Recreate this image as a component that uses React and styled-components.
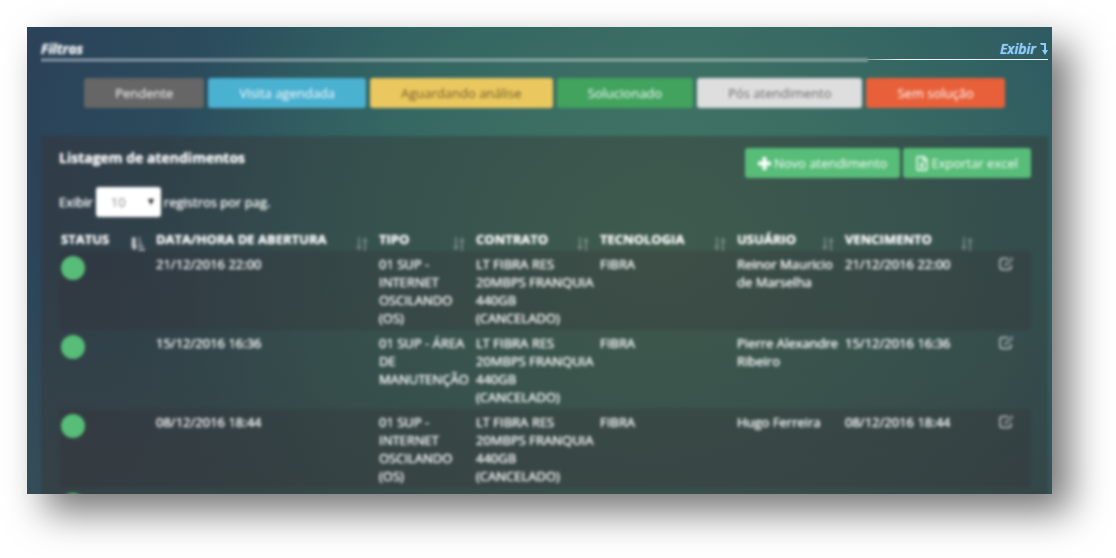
import { useState } from "react";
import styled, { createGlobalStyle, css } from "styled-components";
import { FaRegFileExcel } from "react-icons/fa";

const GlobalStyle = createGlobalStyle`
  * {
    box-sizing: border-box;
  }

  body {
    margin: 0;
    background: #fff;
    color: #fff;
    font-family: "Open Sans", "Noto Sans", sans-serif;
    font-size: 13px;
    line-height: 18px;
  }

  button,
  select {
    font: inherit;
  }
`;

const outOfFocus = css`
  filter: blur(1px) blur(1px);
  text-shadow: 0 0 1px currentColor;
`;

const Page = styled.div`
  display: flex;
  height: 100vh;
  padding: 27px 64px 64px 27px;
  overflow: hidden;
`;

const Screen = styled.main`
  flex: 1;
  min-width: 0;
  padding: 12px 4px 0 14px;
  overflow: hidden;
  background:
    radial-gradient(
      ellipse 50% 82% at 62% 46%,
      rgba(76, 126, 98, 0.75) 0%,
      rgba(70, 122, 100, 0.45) 50%,
      rgba(60, 112, 104, 0) 100%
    ),
    linear-gradient(
      to bottom,
      rgba(60, 84, 84, 0) 50%,
      rgba(60, 84, 84, 0.5) 100%
    ),
    linear-gradient(
      100deg,
      #2b4259 0%,
      #2b4a5c 14%,
      #2c5c62 34%,
      #326463 60%,
      #2e5c62 84%,
      #2b5660 100%
    );
  box-shadow: 18px 18px 36px rgba(0, 0, 0, 0.54);
`;

const FilterHeader = styled.header`
  display: flex;
  justify-content: space-between;
  height: 20px;
  font-size: 14px;
  line-height: 20px;
  font-style: italic;
`;

const FilterTitle = styled.h2`
  margin: 0;
  font-size: 14px;
  font-weight: 700;
  ${outOfFocus}
`;

const ToggleButton = styled.button`
  display: flex;
  align-items: center;
  gap: 4px;
  padding: 0;
  border: 0;
  background: none;
  color: #8fcdfb;
  font-size: 14px;
  font-style: italic;
  font-weight: 600;
  text-shadow: 0 0 1px currentColor;
  cursor: pointer;
`;

const Rule = styled.div`
  display: flex;
  align-items: center;
  height: 1px;
`;

const SoftLine = styled.span`
  flex: 1;
  height: 4px;
  background: rgba(255, 255, 255, 0.32);
  filter: blur(1px);
`;

const SharpLine = styled.span`
  width: 180px;
  height: 1px;
  background: linear-gradient(to right, rgba(255, 255, 255, 0.4), #e8f2f4 32px);
`;

const Filters = styled.nav`
  display: flex;
  justify-content: center;
  gap: 4px;
  padding: 18px 0 28px;
  ${outOfFocus}
`;

const FilterButton = styled.button`
  height: 30px;
  padding: 0 31px;
  border: 0;
  border-radius: 3px;
  background: ${({ $bg }) => $bg};
  color: ${({ $color }) => $color || "#fff"};
  cursor: pointer;
`;

const Panel = styled.section`
  min-height: 100%;
  padding: 12px 17px 0 18px;
  background: rgba(54, 52, 50, 0.44);
  ${outOfFocus}
`;

const PanelHeader = styled.div`
  display: flex;
  justify-content: space-between;
`;

const PanelTitle = styled.h1`
  margin: 0;
  font-size: 14px;
  line-height: 20px;
  font-weight: 700;
`;

const Actions = styled.div`
  display: flex;
  gap: 3px;
`;

const ActionButton = styled.button`
  display: flex;
  align-items: center;
  gap: 3px;
  height: 30px;
  padding: 0 13px;
  border: 0;
  border-radius: 3px;
  background: #57bd78;
  color: #fff;
  cursor: pointer;
`;

const SheetIcon = styled(FaRegFileExcel)`
  width: 12px;
  height: 15px;
`;

const PageSize = styled.label`
  display: flex;
  align-items: center;
  gap: 3px;
  margin: 9px 0 13px;
`;

const SelectBox = styled.span`
  position: relative;
  display: flex;

  svg {
    position: absolute;
    top: 12px;
    right: 7px;
    pointer-events: none;
  }
`;

const Select = styled.select`
  appearance: none;
  width: 65px;
  height: 30px;
  padding: 0 15px;
  border: 0;
  border-radius: 3px;
  background: #fff;
  color: #888;
`;

const Table = styled.table`
  width: 100%;
  table-layout: fixed;
  border-collapse: collapse;
`;

const Col = styled.col`
  width: ${({ $width }) => $width};
`;

const Th = styled.th`
  padding: 0 9px 0 2px;
  text-align: left;
  font-weight: 700;
  white-space: nowrap;
`;

const ThContent = styled.div`
  display: flex;
  justify-content: space-between;
  height: 21px;

  svg {
    align-self: flex-end;
  }
`;

const Row = styled.tr`
  &:nth-child(odd) {
    background: rgba(54, 40, 44, 0.22);
  }
`;

const Td = styled.td`
  height: 79px;
  padding: 4px 2px 3px;
  vertical-align: top;
`;

const StatusDot = styled.span`
  display: block;
  width: 24px;
  height: 24px;
  margin-top: 1px;
  border-radius: 50%;
  background: #57bd78;
`;

const EditButton = styled.button`
  display: block;
  margin: 0 0 0 15px;
  padding: 2px 0;
  border: 0;
  background: none;
  color: rgba(255, 255, 255, 0.7);
  line-height: 0;
  cursor: pointer;
`;

const PlusIcon = () => (
  <svg width="13" height="13" viewBox="0 0 13 13" fill="currentColor">
    <path d="M4.500 0h4v4.500H13v4H8.500V13h-4V8.500H0v-4h4.500z" />
  </svg>
);

const EditIcon = () => (
  <svg
    width="15"
    height="14"
    viewBox="0 0 15 14"
    fill="none"
    stroke="currentColor"
    strokeWidth="1.500"
  >
    <path d="M9 1.500H3.500Q1 1.500 1 4v6q0 2.500 2.500 2.500h6Q12 12.500 12 10V8" />
    <path d="M6 8.500l.5-2L12.500.800l1.500 1.400L8 8z" strokeWidth="1" />
  </svg>
);

const SortIcon = ({ active }) =>
  active ? (
    <svg width="14" height="14" viewBox="0 0 15 14" fill="#fff" opacity="0.75">
      <path d="M1 0h4v9h2l-3.500 5L0 9h1zM8 0h2v2H8zM8 4h3v2H8zM8 8h5v2H8zM8 12h7v2H8z" />
    </svg>
  ) : (
    <svg width="12" height="14" viewBox="0 0 12 14" fill="#fff" opacity="0.28">
      <path d="M2 0h2v9h2l-3 5-3-5h2zM8 14h2V5h2L9 0 6 5h2z" />
    </svg>
  );

const filters = [
  { label: "Pendente", bg: "#666" },
  { label: "Visita agendada", bg: "#4bb1d1" },
  { label: "Aguardando análise", bg: "#eac85f", color: "#6f5b2b" },
  { label: "Solucionado", bg: "#41a35e" },
  { label: "Pós atendimento", bg: "#dedede", color: "#6a6a6a" },
  { label: "Sem solução", bg: "#e8603a" },
];

const columns = [
  { label: "STATUS", width: "95px", active: true },
  { label: "DATA/HORA DE ABERTURA", width: "auto" },
  { label: "TIPO", width: "97px" },
  { label: "CONTRATO", width: "124px" },
  { label: "TECNOLOGIA", width: "137px" },
  { label: "USUÁRIO", width: "108px" },
  { label: "VENCIMENTO", width: "139px" },
];

const contract = "LT FIBRA RES 20MBPS FRANQUIA 440GB (CANCELADO)";

const requests = [
  {
    id: 1,
    date: "21/12/2016 22:00",
    type: "01 SUP - INTERNET OSCILANDO (OS)",
    user: "Reinor Mauricio de Marselha",
  },
  {
    id: 2,
    date: "15/12/2016 16:36",
    type: "01 SUP - ÁREA DE MANUTENÇÃO",
    user: "Pierre Alexandre Ribeiro",
  },
  {
    id: 3,
    date: "08/12/2016 18:44",
    type: "01 SUP - INTERNET OSCILANDO (OS)",
    user: "Hugo Ferreira",
  },
  { id: 4 },
];

const RequestRow = ({ date, type, user }) => (
  <Row>
    <Td>
      <StatusDot />
    </Td>
    <Td>{date}</Td>
    <Td>{type}</Td>
    <Td>{date && contract}</Td>
    <Td>{date && "FIBRA"}</Td>
    <Td>{user}</Td>
    <Td>{date}</Td>
    <Td>
      {date && (
        <EditButton type="button" aria-label="Editar">
          <EditIcon />
        </EditButton>
      )}
    </Td>
  </Row>
);

export default function App() {
  const [pageSize, setPageSize] = useState("10");

  return (
    <>
      <GlobalStyle />
      <Page>
        <Screen>
          <FilterHeader>
            <FilterTitle>Filtros</FilterTitle>
            <ToggleButton type="button">
              Exibir
              <svg width="8" height="12" viewBox="0 0 8 12" fill="currentColor">
                <path d="M0 0h6v7h2l-3 5-3-5h2V2H1z" />
              </svg>
            </ToggleButton>
          </FilterHeader>
          <Rule>
            <SoftLine />
            <SharpLine />
          </Rule>
          <Filters>
            {filters.map(({ label, bg, color }) => (
              <FilterButton key={label} type="button" $bg={bg} $color={color}>
                {label}
              </FilterButton>
            ))}
          </Filters>
          <Panel>
            <PanelHeader>
              <PanelTitle>Listagem de atendimentos</PanelTitle>
              <Actions>
                <ActionButton type="button">
                  <PlusIcon />
                  Novo atendimento
                </ActionButton>
                <ActionButton type="button">
                  <SheetIcon />
                  Exportar excel
                </ActionButton>
              </Actions>
            </PanelHeader>
            <PageSize>
              Exibir
              <SelectBox>
                <Select
                  value={pageSize}
                  onChange={({ target }) => setPageSize(target.value)}
                >
                  <option>10</option>
                  <option>25</option>
                  <option>50</option>
                </Select>
                <svg width="6" height="6" viewBox="0 0 6 6" fill="#222">
                  <path d="M0 0h6L3 6z" />
                </svg>
              </SelectBox>
              registros por pag.
            </PageSize>
            <Table>
              <colgroup>
                {columns.map(({ label, width }) => (
                  <Col key={label} $width={width} />
                ))}
                <Col $width="49px" />
              </colgroup>
              <thead>
                <tr>
                  {columns.map(({ label, active }) => (
                    <Th key={label} scope="col">
                      <ThContent>
                        {label}
                        <SortIcon active={active} />
                      </ThContent>
                    </Th>
                  ))}
                  <Th />
                </tr>
              </thead>
              <tbody>
                {requests.map(({ id, date, type, user }) => (
                  <RequestRow key={id} date={date} type={type} user={user} />
                ))}
              </tbody>
            </Table>
          </Panel>
        </Screen>
      </Page>
    </>
  );
}
